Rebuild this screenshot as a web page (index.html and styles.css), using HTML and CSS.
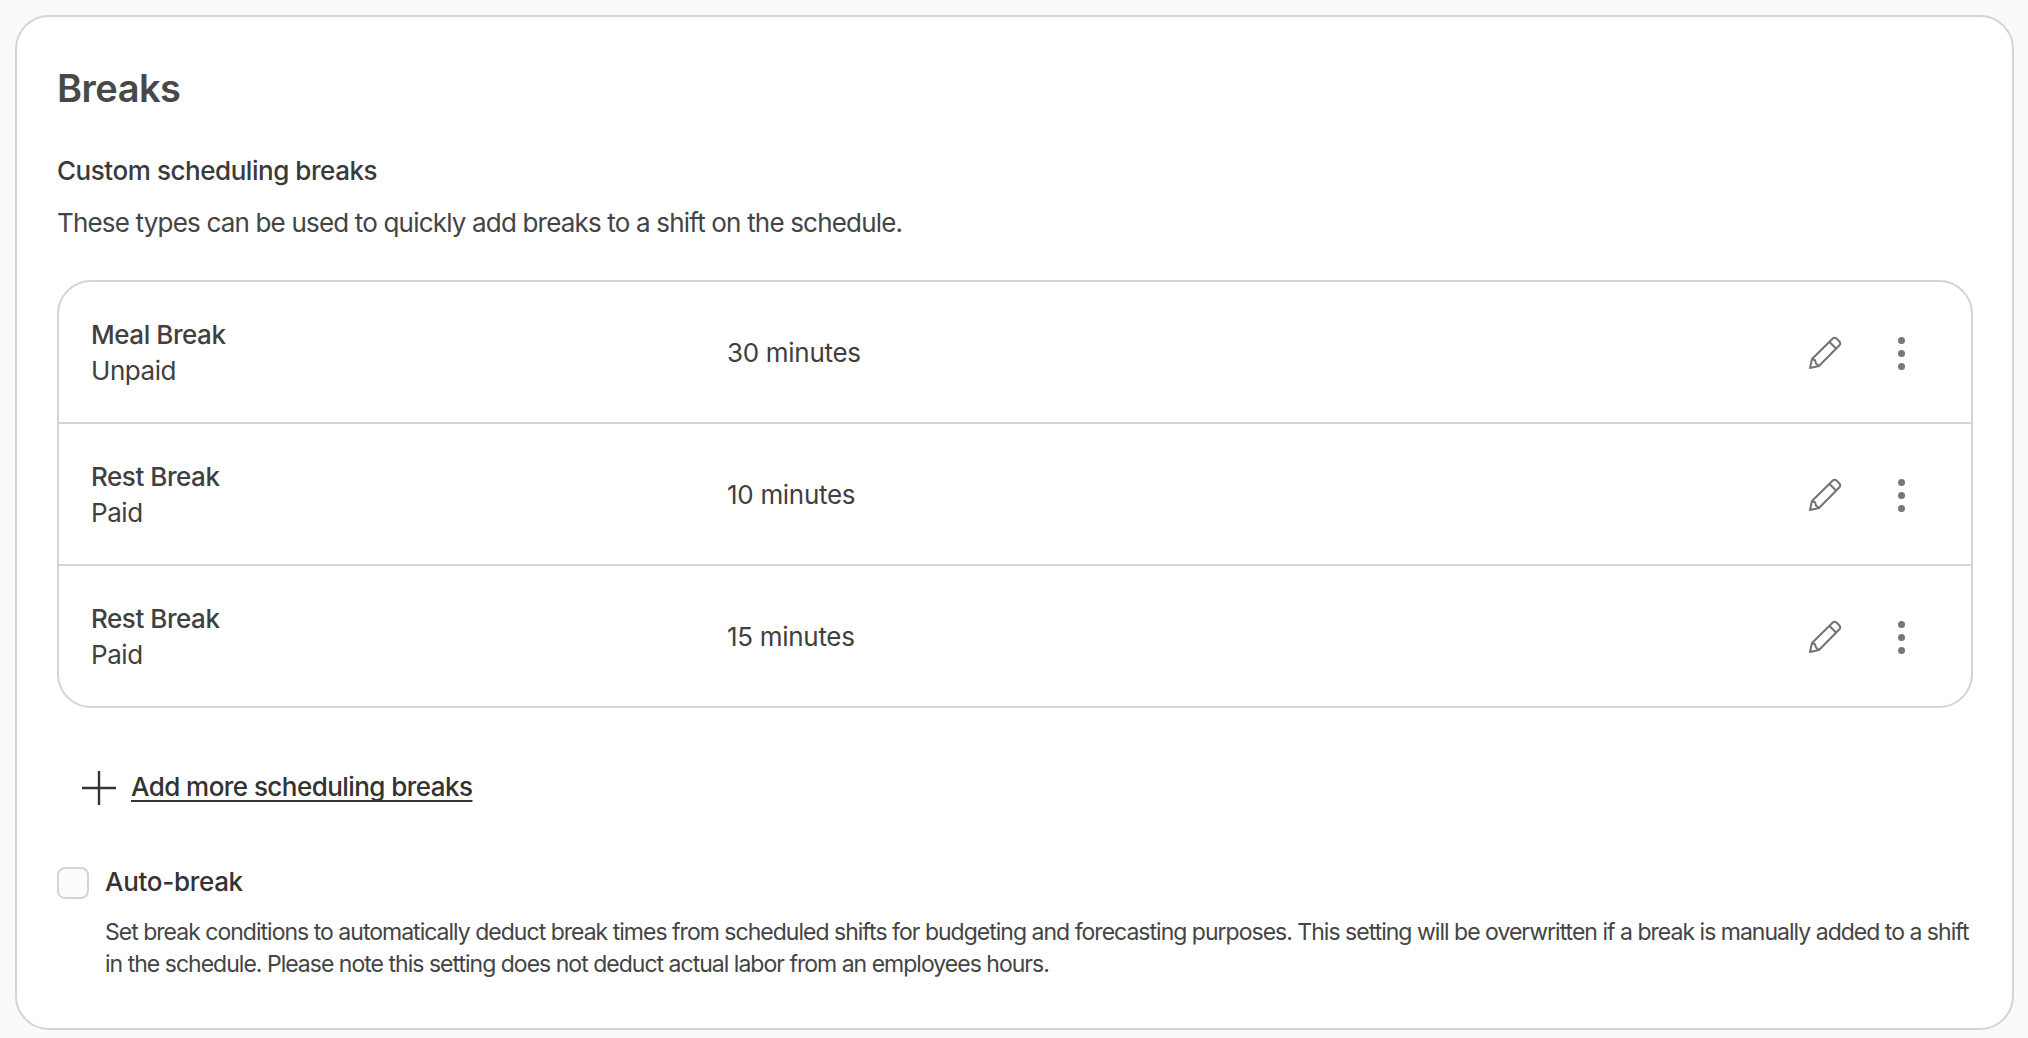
FILE: index.html
```html
<!DOCTYPE html>
<html lang="en">
  <head>
    <meta charset="utf-8">
    <title>Breaks</title>
    <link rel="stylesheet" href="styles.css">
  </head>
  <body>
    <section class="card">
      <h1>Breaks</h1>
      <h2>Custom scheduling breaks</h2>
      <p class="intro">These types can be used to quickly add breaks to a shift on the schedule.</p>

      <div class="break-list">
        <div class="break-row">
          <div class="break-name">
            <strong>Meal Break</strong>
            <span>Unpaid</span>
          </div>
          <div class="break-time">30 minutes</div>
          <div class="break-actions">
            <svg class="pencil" viewBox="0 0 34 34"><path d="M2 32l2-9L24.5 2.8a3 3 0 0 1 4.2 0l2.5 2.5a3 3 0 0 1 0 4.2L11 30zM4 23l3 1.200 1 3.300 3 2.500M21.500 6l6.500 6.500"/></svg>
            <div class="dots"><i></i><i></i><i></i></div>
          </div>
        </div>
        <div class="break-row">
          <div class="break-name">
            <strong>Rest Break</strong>
            <span>Paid</span>
          </div>
          <div class="break-time">10 minutes</div>
          <div class="break-actions">
            <svg class="pencil" viewBox="0 0 34 34"><path d="M2 32l2-9L24.5 2.8a3 3 0 0 1 4.2 0l2.5 2.5a3 3 0 0 1 0 4.2L11 30zM4 23l3 1.200 1 3.300 3 2.500M21.500 6l6.500 6.500"/></svg>
            <div class="dots"><i></i><i></i><i></i></div>
          </div>
        </div>
        <div class="break-row">
          <div class="break-name">
            <strong>Rest Break</strong>
            <span>Paid</span>
          </div>
          <div class="break-time">15 minutes</div>
          <div class="break-actions">
            <svg class="pencil" viewBox="0 0 34 34"><path d="M2 32l2-9L24.5 2.8a3 3 0 0 1 4.2 0l2.5 2.5a3 3 0 0 1 0 4.2L11 30zM4 23l3 1.200 1 3.300 3 2.500M21.500 6l6.500 6.500"/></svg>
            <div class="dots"><i></i><i></i><i></i></div>
          </div>
        </div>
      </div>

      <div class="add-more">
        <svg class="plus" viewBox="0 0 34 34"><path d="M0 17h34M17 0v34"/></svg>
        <a href="#">Add more scheduling breaks</a>
      </div>

      <div class="auto-break">
        <span class="checkbox"></span>
        <div>
          <div class="auto-title">Auto-break</div>
          <p class="auto-text">Set break conditions to automatically deduct break times from scheduled shifts for budgeting and forecasting purposes. This setting will be overwritten if a break is manually added to a shift in the schedule. Please note this setting does not deduct actual labor from an employees hours.</p>
        </div>
      </div>
    </section>
  </body>
</html>
```

FILE: styles.css
```css
html, body{
  margin: 0;
  height: 100%;
}

body{
  background: #fafafa;
  padding: 15px 14px 0 15px;
  box-sizing: border-box;
  font-family: Inter, "Liberation Sans", sans-serif;
  color: #404040;
  overflow: hidden;
}

.card{
  height: 1015px;
  box-sizing: border-box;
  background: #fff;
  border: 2px solid #d4d4d4;
  border-radius: 34px;
  padding: 48px 39px 0 40px;
}

h1{
  margin: 0;
  font-size: 38px;
  line-height: 46px;
  font-weight: 600;
  letter-spacing: -0.5px;
  color: #484848;
}

h2{
  margin: 44px 0 0;
  font-size: 26px;
  line-height: 32px;
  font-weight: 500;
  letter-spacing: -0.45px;
  color: #3a3a3a;
}

.intro{
  margin: 20px 0 0;
  font-size: 26px;
  line-height: 32px;
  letter-spacing: -0.82px;
  color: #444;
}

.break-list{
  margin-top: 41px;
  border: 2px solid #d4d4d4;
  border-radius: 34px;
}

.break-row{
  display: flex;
  align-items: center;
  height: 140px;
  padding-left: 32px;
  border-bottom: 2px solid #d4d4d4;
}

.break-row:last-child{
  border-bottom: 0;
}

.break-name{
  width: 636px;
  padding-top: 2px;
  font-size: 26px;
  line-height: 36px;
  letter-spacing: -0.45px;
}

.break-name strong{
  display: block;
  font-weight: 500;
}

.break-name span{
  display: block;
}

.break-time{
  font-size: 26px;
  letter-spacing: -0.3px;
}

.break-actions{
  margin: 2px 0 0 auto;
  display: flex;
  align-items: center;
  padding-right: 66px;
}

.pencil{
  width: 34px;
  height: 34px;
  fill: none;
  stroke: #737373;
  stroke-width: 2;
  stroke-linejoin: round;
}

.dots{
  margin-left: 56px;
  display: flex;
  flex-direction: column;
  gap: 6px;
}

.dots i{
  display: block;
  width: 7px;
  height: 7px;
  border-radius: 50%;
  background: #777;
}

.add-more{
  margin: 60px 0 0 25px;
  display: flex;
  align-items: center;
  gap: 15px;
  font-size: 26px;
  font-weight: 500;
  letter-spacing: -0.55px;
}

.add-more a{
  color: #333;
  text-decoration: underline;
  text-decoration-skip-ink: none;
  text-underline-offset: 4px;
  text-decoration-thickness: 2px;
}

.plus{
  width: 34px;
  height: 34px;
  margin-top: 3px;
  fill: none;
  stroke: #333;
  stroke-width: 2.4;
}

.auto-break{
  margin-top: 61px;
  display: flex;
  gap: 16px;
}

.checkbox{
  flex: none;
  width: 28px;
  height: 28px;
  margin-top: 1px;
  border: 2px solid #d4d4d4;
  border-radius: 8px;
  background: #fcfcfc;
}

.auto-title{
  font-size: 26px;
  line-height: 32px;
  font-weight: 500;
  letter-spacing: -0.3px;
  color: #333;
}

.auto-text{
  margin: 18px 0 0;
  font-size: 23px;
  line-height: 32px;
  letter-spacing: -0.985px;
  color: #444;
}
```
